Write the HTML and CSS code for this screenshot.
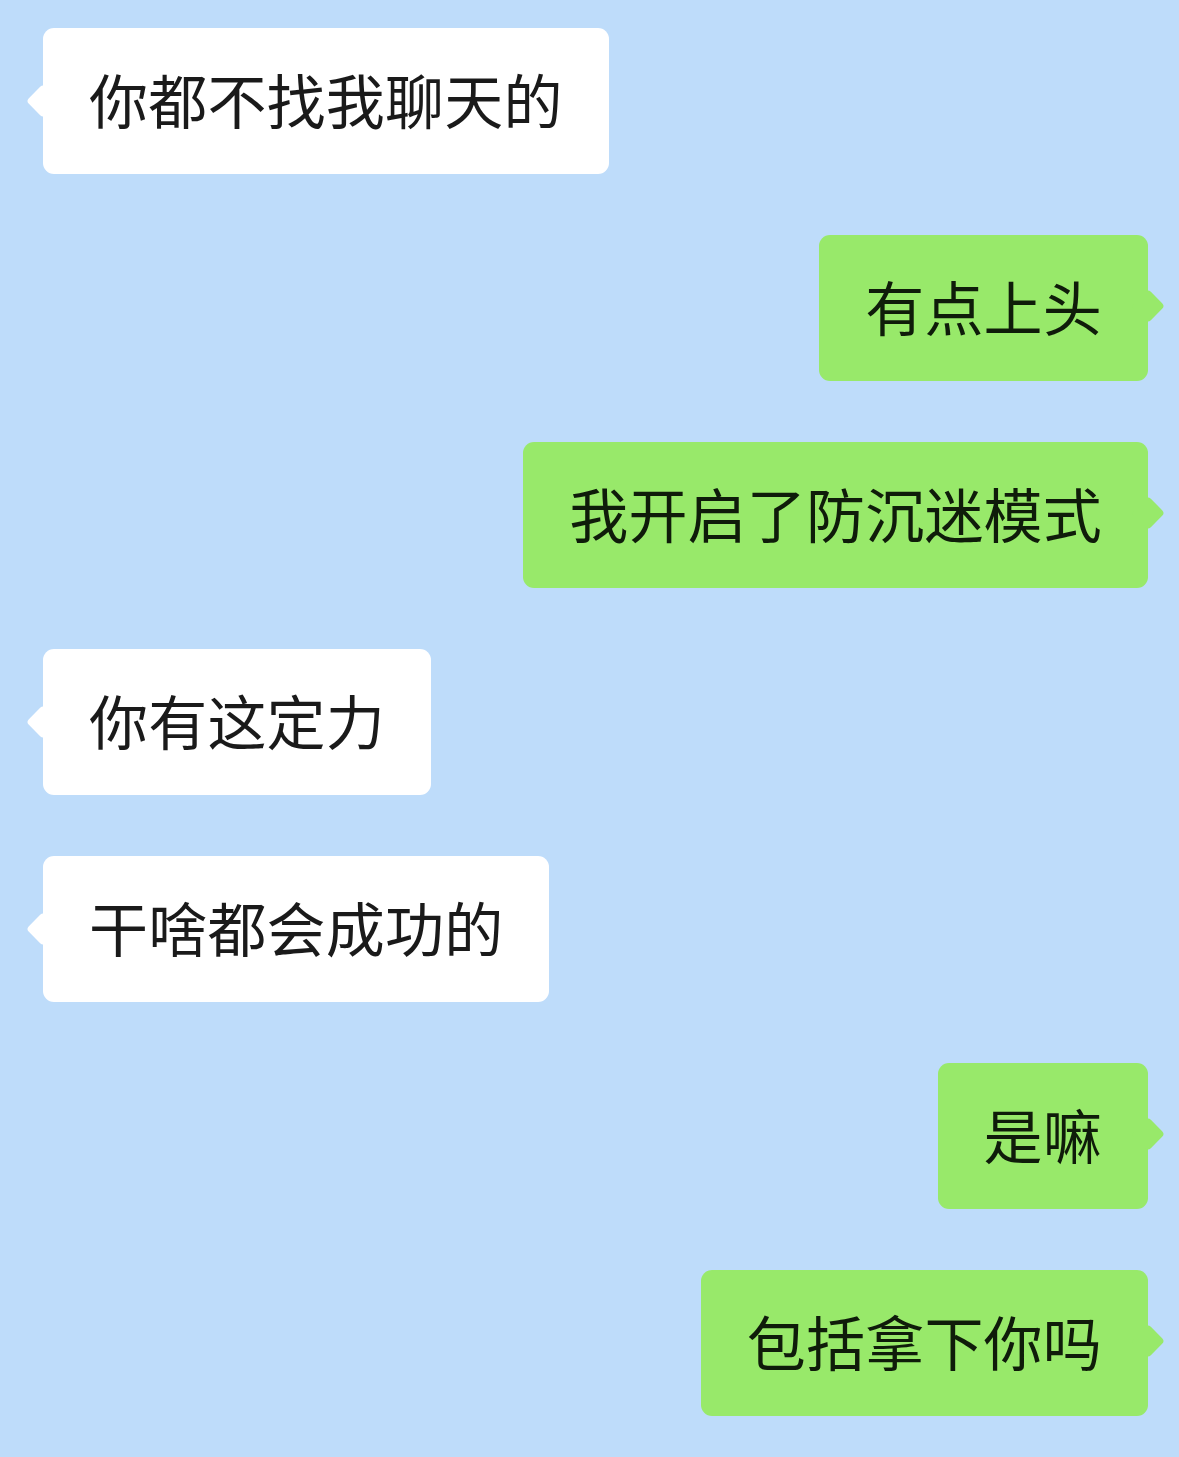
FILE: index.html
```html
<!DOCTYPE html>
<html lang="zh-CN">
<head>
<meta charset="utf-8">
<title>聊天</title>
<link rel="stylesheet" href="styles.css">
</head>
<body>
<main class="chat">
  <div class="bubble left">你都不找我聊天的</div>
  <div class="bubble right">有点上头</div>
  <div class="bubble right">我开启了防沉迷模式</div>
  <div class="bubble left">你有这定力</div>
  <div class="bubble left">干啥都会成功的</div>
  <div class="bubble right">是嘛</div>
  <div class="bubble right">包括拿下你吗</div>
</main>
</body>
</html>
```

FILE: styles.css
```css
html, body {
  margin: 0;
  padding: 0;
  background: #bedcfa;
}

.chat {
  display: flex;
  flex-direction: column;
  gap: 61px;
  padding: 28px 31px 41px 43px;
  min-height: 1457px;
  box-sizing: border-box;
}

.bubble {
  position: relative;
  font-family: "Noto Sans CJK SC", "Noto Sans", sans-serif;
  font-size: 59px;
  line-height: 142px;
  height: 146px;
  box-sizing: border-box;
  padding: 0 46px;
  border-radius: 11px;
  white-space: nowrap;
  letter-spacing: 0.2px;
}

.bubble::before {
  content: "";
  position: absolute;
  top: 50%;
  width: 24px;
  height: 24px;
  border-radius: 4px;
  transform: translateY(-50%) rotate(45deg);
}

.left {
  align-self: flex-start;
  background: #ffffff;
  color: #1a1a1a;
}

.left::before {
  left: -12px;
  background: #ffffff;
}

.right {
  align-self: flex-end;
  background: #98e96a;
  color: #0f1c0a;
}

.right::before {
  right: -12px;
  margin-top: -2px;
  background: #98e96a;
}
```
